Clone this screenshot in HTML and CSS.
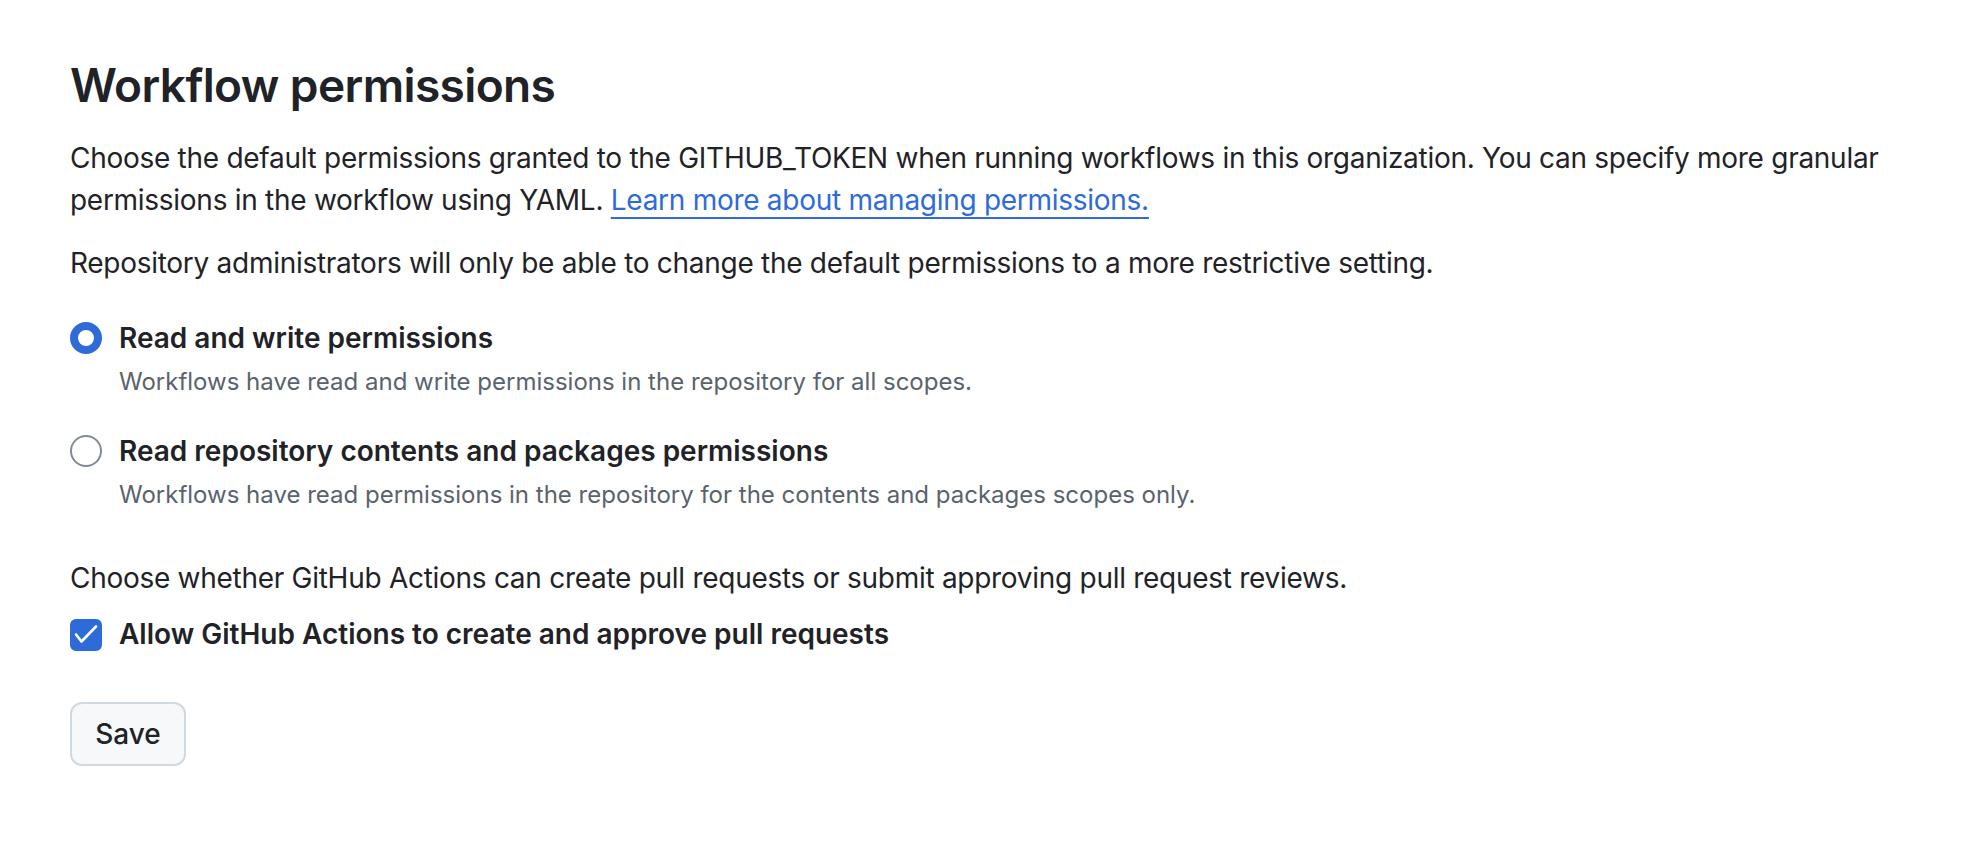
FILE: index.html
```html
<!DOCTYPE html>
<html lang="en">
<head>
    <meta charset="UTF-8">
    <meta name="viewport" content="width=device-width, initial-scale=1.0">
    <title>Actions - Workflow permissions</title>
    <link rel="stylesheet" href="styles.css">
</head>
<body>
    <form class="settings" onsubmit="return false;">
        <h2 class="settings-title">Workflow permissions</h2>

        <p class="note">Choose the default permissions granted to the GITHUB_TOKEN when running workflows in this organization. You can specify more granular permissions in the workflow using YAML. <a href="#" class="link">Learn more about managing permissions.</a></p>
        <p class="note">Repository administrators will only be able to change the default permissions to a more restrictive setting.</p>

        <div class="option-group">
            <label class="option">
                <input type="radio" name="workflow_permissions" value="write" class="radio" checked>
                <span class="option-text">
                    <span class="option-label">Read and write permissions</span>
                    <span class="option-hint">Workflows have read and write permissions in the repository for all scopes.</span>
                </span>
            </label>
            <label class="option">
                <input type="radio" name="workflow_permissions" value="read" class="radio">
                <span class="option-text">
                    <span class="option-label">Read repository contents and packages permissions</span>
                    <span class="option-hint">Workflows have read permissions in the repository for the contents and packages scopes only.</span>
                </span>
            </label>
        </div>

        <p class="note note-pr">Choose whether GitHub Actions can create pull requests or submit approving pull request reviews.</p>

        <label class="option option-check">
            <input type="checkbox" name="can_approve_pull_requests" class="checkbox" checked>
            <svg class="checkmark" width="32" height="32" viewBox="0 0 32 32" aria-hidden="true">
                <polyline points="6,15.5 11.5,22.5 26,7.5" fill="none" stroke="#fff" stroke-width="2.6" stroke-linecap="round" stroke-linejoin="round"/>
            </svg>
            <span class="option-label">Allow GitHub Actions to create and approve pull requests</span>
        </label>

        <button type="submit" class="btn">Save</button>
    </form>
</body>
</html>
```

FILE: styles.css
```css
* {
    margin: 0;
    padding: 0;
    box-sizing: border-box;
}

body {
    font-family: Inter, "Noto Sans", "Liberation Sans", sans-serif;
    background: #fff;
    color: #1f2328;
    font-size: 28px;
    line-height: 42px;
}

.settings {
    padding: 55px 30px 55px 70px;
}

.settings-title {
    font-size: 46px;
    line-height: 60px;
    font-weight: 600;
    letter-spacing: -0.6px;
    margin-bottom: 22px;
}

.note {
    margin-bottom: 21px;
    letter-spacing: -0.28px;
}

.link {
    color: #2e6bd9;
    text-decoration: underline;
    text-decoration-thickness: 2px;
    text-underline-offset: 7px;
}

.option-group {
    margin-top: 33px;
    display: flex;
    flex-direction: column;
    gap: 30px;
}

.option {
    display: flex;
    align-items: flex-start;
    cursor: pointer;
}

.option-text {
    display: flex;
    flex-direction: column;
    gap: 5px;
}

.option-label {
    font-weight: 600;
}

.option-hint {
    font-size: 24px;
    line-height: 36px;
    color: #59636e;
}

/* radios and checkbox are drawn by hand */
.radio {
    appearance: none;
    flex: none;
    width: 32px;
    height: 32px;
    margin: 5px 17px 0 0;
    border-radius: 50%;
    border: 2px solid #818b98;
    background: #fff;
}

.radio:checked {
    border: 8px solid #2e6bd9;
}

.note-pr {
    margin-top: 44px;
    margin-bottom: 14px;
}

.option-check {
    position: relative;
}

.checkbox {
    appearance: none;
    flex: none;
    width: 32px;
    height: 32px;
    margin: 6px 17px 0 0;
    border-radius: 6px;
    border: 2px solid #818b98;
    background: #fff;
}

.checkbox:checked {
    background: #2e6bd9;
    border-color: #2e6bd9;
}

.checkmark {
    position: absolute;
    left: 0;
    top: 6px;
    pointer-events: none;
}

.btn {
    display: flex;
    align-items: center;
    justify-content: center;
    margin-top: 47px;
    width: 116px;
    height: 64px;
    font-family: inherit;
    font-size: 28px;
    font-weight: 500;
    color: #1f2328;
    background: #f6f8fa;
    border: 2px solid #d1d9e0;
    border-radius: 12px;
    cursor: pointer;
}
```
